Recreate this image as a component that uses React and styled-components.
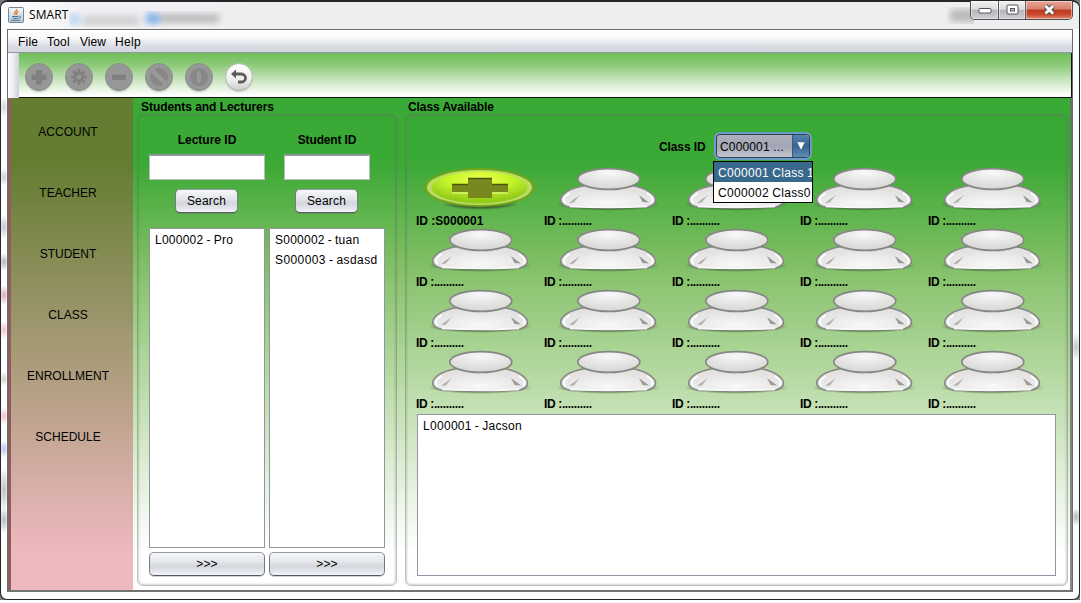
import React from 'react';
import styled, { createGlobalStyle } from 'styled-components';

const Global = createGlobalStyle`
  * { box-sizing: border-box; }
  body { margin: 0; background: #fff; font: 12px/14px "Liberation Sans", Arial, sans-serif; color: #000; overflow: hidden; }
`;

const Desktop = styled.div`
  width: 1080px; height: 600px; background: #777b80; 
`;
const Window = styled.div`
  width: 1080px; height: 600px; border: 1px solid #26262a; border-top-width: 2px;
  border-radius: 8px 8px 7px 7px; padding: 0 6px; background: #fdfdfe;
  background-image:
    radial-gradient(ellipse 5px 14px at 1075px 345px, #c4c4c8, transparent),
    radial-gradient(ellipse 5px 9px at 1075px 515px, #b4b4b8, transparent),
    radial-gradient(ellipse 5px 10px at 3px 105px, #d4d4dc, transparent),
    radial-gradient(ellipse 5px 9px at 3px 175px, #ccccd2, transparent),
    radial-gradient(ellipse 5px 12px at 3px 225px, #c4c2d0, transparent),
    radial-gradient(ellipse 5px 9px at 3px 260px, #b4b4b8, transparent),
    radial-gradient(ellipse 5px 10px at 3px 293px, #d6abbc, transparent),
    radial-gradient(ellipse 5px 9px at 3px 328px, #f0c0c4, transparent),
    radial-gradient(ellipse 5px 7px at 3px 377px, #d0d0cc, transparent),
    radial-gradient(ellipse 5px 9px at 3px 414px, #f0c0c4, transparent),
    radial-gradient(ellipse 5px 9px at 3px 447px, #c4c0ee, transparent),
    radial-gradient(ellipse 5px 22px at 3px 488px, #bcbcc0, transparent),
    radial-gradient(ellipse 5px 13px at 3px 518px, #b4b2c4, transparent);
`;
const TitleBar = styled.div`
  height: 27px; margin: 0 -6px; padding: 0 0 0 7px; display: flex; align-items: flex-start;
  border-radius: 6px 6px 0 0;
  background: linear-gradient(90deg, #fdfdfe 0, #f8f8f9 50px, transparent 90px, transparent 200px, #eee 250px),
    linear-gradient(#f1f1f6, #ececee 60%, #f2f2f4);
`;
const AppTitle = styled.div`
  font: 12px/16px "Open Sans", "Noto Sans", sans-serif; margin: 5px 0 0 5px; width: 40px; letter-spacing: .1px;
`;
const JavaMark = styled.svg` width: 16px; height: 16px; margin-top: 5px; `;
const Ghosts = styled.svg` width: 170px; height: 27px; `;
const EdgeShade = styled.svg` width: 30px; height: 27px; margin: 0 -4px 0 auto; `;
const Defs = styled.svg` position: absolute; `;
const Caption = styled.div`
  margin: -1px 6px 0 0; display: flex; height: 19px; border: 1px solid #4a4e56; border-top: 0;
  border-radius: 0 0 5px 5px; overflow: hidden;
`;
const CaptionButton = styled.div`
  width: ${p => p.$w}px; display: grid; place-items: center;
  border-left: ${p => (p.$first ? 0 : '1px solid #55585f')};
  box-shadow: inset 0 0 0 1px rgba(255,255,255,.45);
  background: ${p => p.$close
    ? 'linear-gradient(#e8a596 0, #d8806c 45%, #bd3a1e 50%, #c94a2c 75%, #e28a6e 100%)'
    : 'linear-gradient(#f2f2f3 0, #dcdcde 45%, #b6b7ba 52%, #cfcfd2 100%)'};
`;

const Client = styled.div`
  height: 563px; border: 1px solid #6b6f70; display: flex; flex-direction: column;
  border-bottom: 2px solid #707473;
`;
const MenuBar = styled.div`
  height: 23px; display: flex; gap: 9px; padding: 5px 0 0 10px; border-bottom: 1px solid #9296a6;
  background: linear-gradient(#fff 0, #f9f9fa 35%, #dadce4 75%, #d6d8e1 100%);
`;
const MenuItem = styled.span` width: ${p => p.$w}px; white-space: nowrap; letter-spacing: ${p => p.$ls || 0}px; `;
const ToolBar = styled.div`
  height: 45px; display: flex; border-bottom: 1px solid #111; border-right: 1px solid #111;
  background: linear-gradient(#6fbf59 0, #8ecb7a 28%, #d3eacb 68%, #fff 97%);
`;
const Grip = styled.div`
  width: 11px; height: 45px; background: linear-gradient(90deg, #fff, #eceef2 45%, #ced1da);
`;
const Tools = styled.div` display: flex; gap: 8px; padding: 7px 0 0 4px; `;
const ToolIcon = styled.svg` width: 32px; height: 34px; `;

const Body = styled.div`
  flex: 1; display: flex; padding-right: 1px; border-right: 2px solid rgba(105,110,105,.8);
  background: linear-gradient(#3ba935 0, #3ba935 65px, #7bbd60 157px, #8ec674 190px, #badba7 287px, #e8f3e2 395px, #fff 455px);
`;
const Sidebar = styled.nav`
  width: 125px; border-left: 3px solid #8d5f5c; padding: 27px 8px 0 0; display: flex; flex-direction: column; gap: 47px;
  text-align: center;
  background: linear-gradient(#647d32 0, #647d32 65px, #edb8be 450px);
`;
const NavItem = styled.a` display: block; height: 14px; `;

const Group = styled.section`
  margin-left: ${p => p.$ml}px; width: ${p => p.$w}px; padding-top: 2px;
`;
const GroupTitle = styled.h2`
  margin: 0; padding-left: ${p => p.$pl}px; font-size: 12px; line-height: 14px; height: 14px; letter-spacing: ${p => p.$ls}px; white-space: nowrap;
`;
const GroupBox = styled.div`
  height: 472px; border: 1px solid rgba(100,105,110,.42); border-radius: 6px;
  box-shadow: inset 0 0 2px 1px rgba(100,105,110,.3);
  ${p => p.$cols ? 'display: flex; gap: 4px; padding: 18px 0 0 11px;' : 'padding: 17px 0 0 11px;'}
`;
const Column = styled.div` width: 116px; display: flex; flex-direction: column; align-items: center; `;
const Strong = styled.label` font-weight: bold; height: 14px; letter-spacing: ${p => p.$ls || 0}px; white-space: nowrap; `;
const Input = styled.div`
  width: ${p => p.$w}px; height: 26px; margin-top: 7px; background: #fff; border: 1px solid #b9bbc0;
  border-top: 2px solid #90949c;
`;
const Button = styled.button`
  width: ${p => p.$w}px; height: 24px; margin: ${p => p.$mt}px 0 0; padding: 0 0 1px; font: inherit; letter-spacing: .2px;
  border: 1px solid; border-color: #979ba5 #757982 #555963; border-radius: 5px;
  background: linear-gradient(#f6f7f9 0, #e4e6ea 40%, #d3d6dd 60%, #e9ebf0 90%, #f4f5f9 100%);
  box-shadow: 0 1px 0 rgba(80,80,90,.25);
`;
const SearchButton = styled(Button)` margin-right: 1px; padding-top: 1px; `;
const List = styled.div`
  width: ${p => p.$w}px; height: ${p => p.$h}px; margin-top: ${p => p.$mt}px; padding: 2px 0 0 5px; background: #fff;
  border: 1px solid #9194a3;
`;
const ListItem = styled.div` height: 20px; line-height: 18px; letter-spacing: ${p => p.$ls}px; word-spacing: -.6px; white-space: nowrap; `;

const ClassRow = styled.div` display: flex; padding-left: 242px; height: 35px; align-items: flex-start; ${Strong} { margin-top: 8px; width: 54px; letter-spacing: -.1px; } `;
const ComboWrap = styled.div` position: relative; padding-left: 1px; `;
const Combo = styled.div`
  width: 98px; height: 28px; border: 2px solid #6a9cc8; border-radius: 6px; display: flex;
  box-shadow: inset 0 0 0 1px #33404f; overflow: hidden;
  background: linear-gradient(#aeb1bc, #a2a6b4 50%, #c4c8d3);
  line-height: 26px; padding: 1px 1px 1px 4px; justify-content: space-between; letter-spacing: .15px;
  & > span { margin-top: -1px; }
`;
const Arrow = styled.svg` width: 17px; height: 22px; border-left: 1px solid #3d5b78; border-radius: 0 3px 3px 0; background: linear-gradient(#5784ab, #36648c 50%, #5d8db5); `;
const Menu = styled.div`
  position: absolute; left: 0; top: 29px; z-index: 2; width: 100px; border: 1px solid #000; background: #fff; overflow: hidden;
`;
const Option = styled.div`
  height: 20px; line-height: 22px; padding-left: 4px; white-space: nowrap; letter-spacing: .33px; word-spacing: -.5px;
  color: ${p => (p.$on ? '#fff' : '#000')}; background: ${p => (p.$on ? '#39698a' : '#fff')};
`;
const Seats = styled.div` display: grid; grid-template-columns: repeat(5, 128px); grid-auto-rows: 61px; margin-left: -1px; `;
const Seat = styled.div` display: flex; flex-direction: column; `;
const SeatArt = styled.svg` width: 128px; height: 47px; display: block; flex: none; overflow: visible; `;

const Person = () => (
  <SeatArt viewBox="0 0 128 47">
    <ellipse cx="64" cy="37.500" rx="52" ry="6.500" fill="url(#shade)" />
    <path d="M25 40 C17 38 14.500 33 19 28 C26 20 41 17 64.500 17 C88 17 101 20 109 28 C114 33 111 38 104 40 Q64 41.500 25 40Z" fill="url(#body)" stroke="#858785" strokeWidth="1.600" />
    <path d="M26 39.300 Q64 41 103 39.300" fill="none" stroke="#f8f8f8" strokeWidth="2" />
    <path d="M25 36 L36 28 L29.500 35.500Z" fill="#aaa" />
    <path d="M95 28 L105 35.500 L98.500 35Z" fill="#999" />
    <path d="M21.500 36 Q17 31 26 26M107.500 36 Q111 31 103 26" stroke="#fff" fill="none" strokeWidth="1.600" />
    <ellipse cx="64.800" cy="12" rx="31" ry="10.400" fill="url(#head)" stroke="#858785" strokeWidth="1.700" />
  </SeatArt>
);
const Taken = () => (
  <SeatArt viewBox="0 0 128 47">
    <ellipse cx="64" cy="37" rx="38" ry="6" fill="url(#shade)" />
    <ellipse cx="63.500" cy="20.500" rx="55.500" ry="19.500" fill="#6fa51a" />
    <ellipse cx="63.500" cy="20.500" rx="52.500" ry="17.500" fill="#b9dd66" />
    <ellipse cx="63.500" cy="20.500" rx="48" ry="16" fill="url(#lime)" />
    <path d="M52 11h24v6h16v8H76v6H52v-6H36v-8h16z" fill="#77881f" />
    <path d="M52 11.500h24M36 17.500h16M76 17.500h16" stroke="#4a5606" strokeWidth="1.300" />
    <path d="M36 26h16M76 26h16" stroke="#d8f06a" strokeWidth="1.500" />
  </SeatArt>
);

const glyphs = [
  <path d="M13 10h6v4.500h4.500v5.500H19v4.500h-6V20H8.500v-5.500H13z" fill="#808080" />,
  <g stroke="#808080" fill="none"><circle cx="16" cy="17" r="4" strokeWidth="2.800" />
    {[0, 45, 90, 135, 180, 225, 270, 315].map(a => <path key={a} d="M16 12V9" strokeWidth="2.800" transform={`rotate(${a} 16 17)`} />)}</g>,
  <path d="M9 14.500h14V20H9z" fill="#808080" />,
  <g><circle cx="16" cy="17" r="9" fill="#878787" /><path d="M9.500 10.500L22.500 23.500" stroke="#999" strokeWidth="4.500" /></g>,
  <g><circle cx="16" cy="17" r="9" fill="#878787" /><path d="M16 13v8" stroke="#999" strokeWidth="4" strokeLinecap="round" /></g>,
  <g fill="none" stroke="#5c5c5c"><path d="M12 14h6.500a4 4 0 0 1 0 8H15" strokeWidth="2.800" /><path d="M8 14l5-4.500v9z" fill="#5c5c5c" stroke="none" /></g>,
];

const seats = Array.from({ length: 20 }, (_, i) => (i === 0 ? 'S000001' : '..........'));

export default function App() {
  return (
    <Desktop>
      <Global />
      <Window>
        <Defs width="0" height="0">
          <defs>
            <radialGradient id="shade"><stop offset=".6" stopColor="#30402c" stopOpacity=".7" /><stop offset="1" stopColor="#30402c" stopOpacity="0" /></radialGradient>
            <radialGradient id="body" cx=".5" cy=".8" r=".6"><stop offset="0" stopColor="#f8f8f8" /><stop offset="1" stopColor="#e2e2e1" /></radialGradient>
            <radialGradient id="head" cx=".5" cy=".2" r=".75"><stop offset="0" stopColor="#f8f8f8" /><stop offset="1" stopColor="#d7d8d5" /></radialGradient>
            <radialGradient id="lime" cx=".5" cy=".25" r=".65"><stop offset="0" stopColor="#f0ff50" /><stop offset=".5" stopColor="#c6f52a" /><stop offset="1" stopColor="#94cc1c" /></radialGradient>
            <linearGradient id="pearl" x2="0" y2="1"><stop offset="0" stopColor="#fff" /><stop offset=".6" stopColor="#eee" /><stop offset="1" stopColor="#ccc" /></linearGradient>
            <linearGradient id="cup" x2="0" y2="1"><stop offset="0" stopColor="#f7f9fb" /><stop offset="1" stopColor="#b5c7d6" /></linearGradient>
            <filter id="soft"><feGaussianBlur stdDeviation="3" /></filter>
          </defs>
        </Defs>
        <TitleBar>
          <JavaMark viewBox="0 0 16 16">
            <rect x=".5" y=".5" width="15" height="15" rx="1" fill="url(#cup)" stroke="#6f8798" />
            <path d="M8.800 2C9.500 4.200 4.800 5 7.200 8M10.300 4.300C8 5.300 8 6.300 8.700 8" fill="none" stroke="#e07a1c" strokeWidth="1.200" />
            <path d="M4 9.500h6.500M4.800 11.300h5M3 13.300h9M11 9c2.500 0 1.500 2.200-.5 2.500" fill="none" stroke="#4a7598" strokeWidth="1" />
          </JavaMark>
          <AppTitle>SMART</AppTitle>
          <Ghosts viewBox="0 0 170 27">
            <g filter="url(#soft)"><rect x="0" y="12" width="11" height="11" fill="#bcd7f2" /><rect x="14" y="15" width="56" height="8" fill="#cdcdcf" />
              <rect x="77" y="11" width="14" height="11" fill="#86b5e6" /><rect x="92" y="12" width="58" height="9" fill="#bcbcbe" /></g>
          </Ghosts>
          <EdgeShade><rect x="6" y="7" width="30" height="13" fill="#bbb" filter="url(#soft)" /></EdgeShade>
          <Caption>
            <CaptionButton $w={27} $first><svg width="14" height="8"><rect x="1" y="2.500" width="12" height="4.500" rx="1" fill="#fff" stroke="#50545f" /></svg></CaptionButton>
            <CaptionButton $w={27}><svg width="13" height="12"><rect x="1" y="1" width="11" height="9" rx="1" fill="#fff" stroke="#50545f" /><rect x="4.500" y="4.500" width="4" height="2.500" fill="#c9cace" stroke="#50545f" /></svg></CaptionButton>
            <CaptionButton $w={47} $close><svg width="13" height="12"><path d="M2.500 2l7.500 7.500M10 2L2.500 9.500" stroke="#4b4e5a" strokeWidth="4.800" /><path d="M2.500 2l7.500 7.500M10 2L2.500 9.500" stroke="#fff" strokeWidth="2.800" /></svg></CaptionButton>
          </Caption>
        </TitleBar>
        <Client>
          <MenuBar>
            <MenuItem $w={20} $ls={0.2}>File</MenuItem><MenuItem $w={24} $ls={0.2}>Tool</MenuItem><MenuItem $w={26}>View</MenuItem><MenuItem $w={28} $ls={0.3}>Help</MenuItem>
          </MenuBar>
          <ToolBar>
            <Grip />
            <Tools>
              {glyphs.map((g, i) => (
                <ToolIcon key={i} viewBox="0 0 32 34">
                  <ellipse cx="16" cy="19.500" rx="14.500" ry="14" fill="url(#shade)" opacity=".6" />
                  <circle cx="16" cy="17" r="13.500" fill={i === 5 ? 'url(#pearl)' : '#979797'} stroke={i === 5 ? '#b5b5b5' : '#8d8d8d'} />
                  {g}
                </ToolIcon>
              ))}
            </Tools>
          </ToolBar>
          <Body>
            <Sidebar>
              {['ACCOUNT', 'TEACHER', 'STUDENT', 'CLASS', 'ENROLLMENT', 'SCHEDULE'].map(t => <NavItem key={t}>{t}</NavItem>)}
            </Sidebar>
            <Group $ml={4} $w={260}>
              <GroupTitle $pl={4} $ls={-0.05}>Students and Lecturers</GroupTitle>
              <GroupBox $cols>
                <Column>
                  <Strong>Lecture ID</Strong>
                  <Input $w={116} />
                  <SearchButton $w={63} $mt={9}>Search</SearchButton>
                  <List $w={116} $h={320} $mt={15}><ListItem $ls={0.25}>L000002 - Pro</ListItem></List>
                  <Button $w={116} $mt={4}>&gt;&gt;&gt;</Button>
                </Column>
                <Column>
                  <Strong $ls={-0.15}>Student ID</Strong>
                  <Input $w={86} />
                  <SearchButton $w={63} $mt={9}>Search</SearchButton>
                  <List $w={116} $h={320} $mt={15}><ListItem $ls={0.25}>S000002 - tuan</ListItem><ListItem $ls={0.4}>S000003 - asdasd</ListItem></List>
                  <Button $w={116} $mt={4}>&gt;&gt;&gt;</Button>
                </Column>
              </GroupBox>
            </Group>
            <Group $ml={8} $w={663}>
              <GroupTitle $pl={3} $ls={-0.08}>Class Available</GroupTitle>
              <GroupBox>
                <ClassRow>
                  <Strong>Class ID</Strong>
                  <ComboWrap>
                    <Combo><span>C000001 ...</span><Arrow viewBox="0 0 17 22"><path d="M4.500 7h8l-4 8z" fill="#fff" /></Arrow></Combo>
                    <Menu><Option $on>C000001 Class 1</Option><Option>C000002 Class0</Option></Menu>
                  </ComboWrap>
                </ClassRow>
                <Seats>
                  {seats.map((s, i) => <Seat key={i}>{i === 0 ? <Taken /> : <Person />}<Strong $ls={i === 0 ? 0 : -0.36}>ID :{s}</Strong></Seat>)}
                </Seats>
                <List $w={639} $h={162} $mt={3}><ListItem $ls={0.3}>L000001 - Jacson</ListItem></List>
              </GroupBox>
            </Group>
          </Body>
        </Client>
      </Window>
    </Desktop>
  );
}
